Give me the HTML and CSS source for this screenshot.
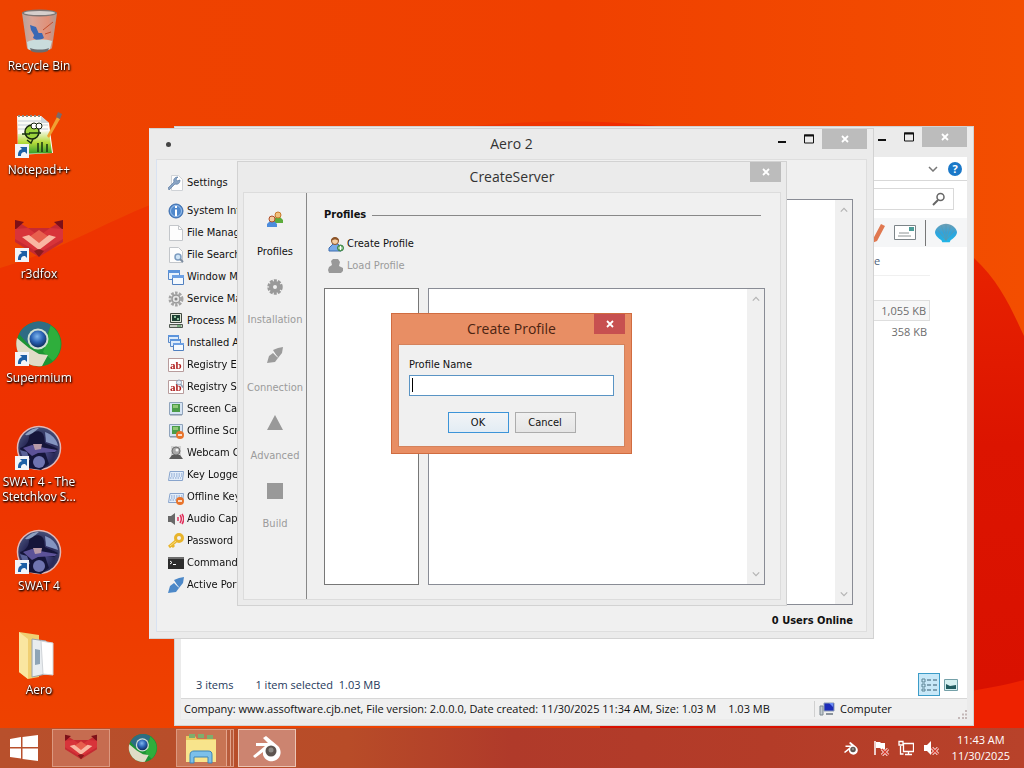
FILE: index.html
```html
<!DOCTYPE html>
<html lang="en">
<head>
    <meta charset="UTF-8">
    <meta name="viewport" content="width=device-width, initial-scale=1.0">
    <title>Desktop</title>
    <link rel="stylesheet" href="styles.css">
</head>
<body>
    <!-- shared icons -->
    <svg class="sprite" aria-hidden="true">
        <defs>
            <linearGradient id="waveA" x1="0" y1="0" x2="0" y2="1">
                <stop offset="0" stop-color="#ee3400"/>
                <stop offset="0.5" stop-color="#ee3200"/>
                <stop offset="1" stop-color="#ee4400"/>
            </linearGradient>
            <linearGradient id="waveB" x1="0" y1="0" x2="0" y2="1">
                <stop offset="0" stop-color="#f02c00"/>
                <stop offset="0.5" stop-color="#dc1400"/>
                <stop offset="1" stop-color="#d81000"/>
            </linearGradient>
            <linearGradient id="sky" x1="0" y1="0" x2="1" y2="0">
                <stop offset="0" stop-color="#ee4300"/>
                <stop offset="0.55" stop-color="#f04000"/>
                <stop offset="1" stop-color="#f34e00"/>
            </linearGradient>
            <linearGradient id="glass" x1="0" y1="0" x2="1" y2="0">
                <stop offset="0" stop-color="#b4a29c"/>
                <stop offset="0.3" stop-color="#d9a496"/>
                <stop offset="0.75" stop-color="#e09078"/>
                <stop offset="1" stop-color="#a99b97"/>
            </linearGradient>
            <linearGradient id="grass" x1="0" y1="0" x2="0" y2="1">
                <stop offset="0" stop-color="#f2f7e6"/>
                <stop offset="0.5" stop-color="#b6dc3c"/>
                <stop offset="1" stop-color="#2f9c28"/>
            </linearGradient>
            <radialGradient id="orb" cx="0.45" cy="0.35" r="0.7">
                <stop offset="0" stop-color="#7fb6ee"/>
                <stop offset="0.5" stop-color="#2a62b4"/>
                <stop offset="1" stop-color="#0c2450"/>
            </radialGradient>
            <radialGradient id="night" cx="0.5" cy="0.6" r="0.6">
                <stop offset="0" stop-color="#57589a"/>
                <stop offset="0.6" stop-color="#2a2a58"/>
                <stop offset="1" stop-color="#48527a"/>
            </radialGradient>
            <linearGradient id="shellFill" x1="0" y1="0" x2="0" y2="1">
                <stop offset="0" stop-color="#6f9fb4"/>
                <stop offset="0.5" stop-color="#2fa4dc"/>
                <stop offset="1" stop-color="#1fb6e8"/>
            </linearGradient>
        </defs>

        <symbol id="i-arrow" viewBox="0 0 14 14">
            <rect width="14" height="14" fill="#f2f4f8"/>
            <path d="M3 12c0-4 1-6 4-7L5 3h7v7l-2-2c-3 0-4 1-4 4z" fill="#1d5fa6"/>
        </symbol>
        <symbol id="i-bin" viewBox="0 0 48 48">
            <path d="M7 5l5 35c1 4 23 4 25 0l5-35z" fill="url(#glass)"/>
            <ellipse cx="24.500" cy="5" rx="17.500" ry="3.500" fill="#7e7674"/>
            <ellipse cx="24.500" cy="5" rx="15.500" ry="2" fill="#d6cfcc"/>
            <path d="M15 17l6 2 3 7-5 1-3-5zM20 25l7 0 2 5-6 3-5-3z" fill="#3a68b4"/>
            <path d="M12 34c6-3 18-3 25-1l-2 8c-4 3-18 3-22 0z" fill="#c9dcdc"/>
            <path d="M15 40c6 2 14 2 19 0l-1 3c-5 2-13 2-17 0z" fill="#6b6d70"/>
            <path d="M28 22l10-8M30 26l6-2" stroke="#c05030" fill="none"/>
        </symbol>
        <symbol id="i-notepad" viewBox="0 0 48 48">
            <path d="M2 4h24l8 7 4 30-35 2z" fill="#fbfbf6"/>
            <path d="M3 9h24M3 13h30M3 17h30" stroke="#c4ccd4" fill="none"/>
            <path d="M3 22l31-3 3 22-34 1z" fill="url(#grass)"/>
            <path d="M3 4h22" stroke="#8c8c84" stroke-width="2" stroke-dasharray="2 2"/>
            <path d="M26 4l8 7h-8z" fill="#cdd5da"/>
            <ellipse cx="17" cy="20" rx="7" ry="7" fill="#9ad23c" stroke="#16240c" stroke-width="1.500"/>
            <circle cx="19" cy="14" r="3" fill="#fff" stroke="#16240c"/>
            <circle cx="24" cy="14" r="3" fill="#fff" stroke="#16240c"/>
            <path d="M7 22h8M14 21h12M12 28l4 3 2-4M23 40v-9M27 40V30M32 40v-8" stroke="#183410" stroke-width="1.500" fill="none"/>
            <path d="M32 24L42 5l3 2-11 19z" fill="#f0a032"/>
            <path d="M41 5l2-5 4 2-2 5z" fill="#7a6a6a"/>
        </symbol>
        <symbol id="i-fox" viewBox="0 0 48 48">
            <path d="M0 4l13 8h22l13-8v22L24 41 0 26z" fill="#c62a32"/>
            <path d="M0 4l9 2-9 8zM48 4l-9 2 9 8z" fill="#7d1018"/>
            <path d="M0 13l13-1 11 8 11-8 13 1v10L24 37 0 23z" fill="#d8343a"/>
            <path d="M24 14l10 7-10 7-10-7z" fill="#e8604e"/>
            <path d="M7 21l7-2 10 8 10-8 7 2-17 13z" fill="#f9b7a2"/>
            <path d="M19 35l5-2 5 2-5 6z" fill="#8c1a1c"/>
        </symbol>
        <symbol id="i-chrome" viewBox="0 0 48 48">
            <circle cx="24" cy="24" r="22.500" fill="#1d9434"/>
            <path d="M35 5A22.500 22.500 0 0 1 38 41L28 32l5-12z" fill="#2fae3c"/>
            <path d="M4 14A22.500 22.500 0 0 1 36 5L31 17 13 24z" fill="#2f6c84"/>
            <path d="M2 18l12 10 10 6 9 1-6 11A22.500 22.500 0 0 1 2 18z" fill="#dfdcc6"/>
            <circle cx="23" cy="19" r="10.500" fill="#cfe0d4"/>
            <circle cx="23" cy="19" r="8.500" fill="url(#orb)"/>
        </symbol>
        <symbol id="i-swat" viewBox="0 0 48 48">
            <circle cx="24" cy="24" r="21.500" fill="url(#night)" stroke="#e2b8b6" stroke-width="1.500"/>
            <path d="M5 24c6-2 9-6 9-12 6-7 14-6 15 1l1 6 13 6-4 4-9-1 4 12-8 6-14-2z" fill="#15153a"/>
            <path d="M10 11c5-6 10-7 14-7-5 4-9 8-14 7z" fill="#8d9fc0"/>
            <path d="M8 24l9-3 8 2 17 3-2 2-17 1-6 3z" fill="#5c5298"/>
            <path d="M18 20h9l-1 5-6 1z" fill="#b79aa8"/>
            <path d="M30 8c7 2 12 8 13 14l-12-4z" fill="#8494c0"/>
            <path d="M5 26l7 2 3 8-6 1z" fill="#5a6298"/>
            <circle cx="24" cy="38" r="6" fill="#6f74b0"/>
        </symbol>
        <symbol id="i-folder" viewBox="0 0 48 48">
            <path d="M4 0l20 3v42l-11 2-9-7z" fill="#f0cf72"/>
            <path d="M4 0l9 7v40l-9-7z" fill="#fae6a0"/>
            <path d="M17 7l14 2v33l-14 3z" fill="#e9edf0" stroke="#9aa4ac"/>
            <path d="M20 17l5 1v14l-5 1z" fill="#8fa4b6"/>
            <path d="M26 9l12 2v32l-10-1z" fill="#fff" stroke="#d0d4d8"/>
        </symbol>
        <symbol id="i-blender" viewBox="0 0 32 32">
            <path d="M2 24l12-10H5v-3h12l-5-5 3-2 12 10a9 9 0 1 1-15 9v-3l-8 6z" fill="#fff"/>
            <circle cx="20" cy="19" r="5.500" fill="#5c5450"/>
            <circle cx="20" cy="18" r="2.500" fill="#8d8a86"/>
        </symbol>
        <symbol id="i-explorer" viewBox="0 0 32 32">
            <path d="M1 4h9l2 3h19v23H1z" fill="#e9c95e"/>
            <path d="M4 2h6v4H4zM13 2h6v4h-6zM22 3h6v4h-6z" fill="#7fae6c"/>
            <path d="M1 8h30v22H1z" fill="#f8e48c"/>
            <path d="M5 31v-8c0-3 2-4 4-4h14c3 0 4 1 4 4v8h-4v-6H9v6z" fill="#7cc0ea" stroke="#3c84b8"/>
        </symbol>

        <symbol id="i-page" viewBox="0 0 16 16">
            <path d="M1.500.5h9l4 4v11h-13z" fill="#fdfdfd" stroke="#c3c6ca"/>
            <path d="M10.500.5v4h4" fill="none" stroke="#c3c6ca"/>
        </symbol>
        <symbol id="i-wrench" viewBox="0 0 16 16">
            <path d="M3.500.5h7l4 4v11h-11z" fill="#fdfdfd" stroke="#cfd2d6"/>
            <path d="M1 15l-1-2 6-6c-1-3 1-5 4-5L8 4l1 2 3-1c0 3-2 5-5 4z" fill="#8aa4c4" stroke="#5c7ca4" stroke-width="0.700"/>
        </symbol>
        <symbol id="i-info" viewBox="0 0 16 16">
            <circle cx="8" cy="8" r="7" fill="#4f88cc" stroke="#3c6cac"/>
            <circle cx="8" cy="8" r="5.500" fill="none" stroke="#9cc0ea"/>
            <path d="M8 3v2M8 6.500V13" stroke="#fff" stroke-width="2"/>
        </symbol>
        <symbol id="i-find" viewBox="0 0 16 16">
            <path d="M1.500.5h9l4 4v11h-13z" fill="#fdfdfd" stroke="#c3c6ca"/>
            <circle cx="10" cy="10" r="3" fill="#cfe4f6" stroke="#7c9cc0" stroke-width="1.500"/>
            <path d="M12 12l3 3" stroke="#7c8ca0" stroke-width="2"/>
        </symbol>
        <symbol id="i-windows" viewBox="0 0 16 16">
            <path d="M.5 1.500h11v9H.5z" fill="#e8f2fc" stroke="#5888c8"/>
            <path d="M0 1h12v3H0z" fill="#5c94dc"/>
            <path d="M4.500 6.500h11v9h-11z" fill="#f4f9fe" stroke="#5080c0"/>
            <path d="M4 6h12v3H4z" fill="#6ca0e4"/>
        </symbol>
        <symbol id="i-apps" viewBox="0 0 16 16">
            <path d="M.5.500h10v7H.5z" fill="#dcebfa" stroke="#5888c8"/>
            <path d="M0 0h11v2H0z" fill="#5c94dc"/>
            <path d="M2.500 4.500h10v7h-10z" fill="#dcebfa" stroke="#5888c8"/>
            <path d="M2 4h11v2H2z" fill="#5c94dc"/>
            <path d="M5.500 8.500h10v7h-10z" fill="#f4f9fe" stroke="#5080c0"/>
            <path d="M5 8h11v2H5z" fill="#6ca0e4"/>
        </symbol>
        <symbol id="i-gear" viewBox="0 0 16 16">
            <circle cx="8" cy="8" r="6" fill="none" stroke="#a4a4a4" stroke-width="3" stroke-dasharray="2.500 1.300"/>
            <circle cx="8" cy="8" r="4" fill="#e4e4e4" stroke="#969696" stroke-width="1.500"/>
            <circle cx="8" cy="8" r="1.500" fill="#888"/>
        </symbol>
        <symbol id="i-computer" viewBox="0 0 16 16">
            <path d="M2.500.5h11v9h-11z" fill="#dfe6d8" stroke="#404840"/>
            <path d="M4 2h8v6H4z" fill="#1e4034"/>
            <path d="M6 3h2v2H6zM9 5h2v2H9z" fill="#8cc09c"/>
            <path d="M1.500 11.500h13v3h-13z" fill="#c8ccc4" stroke="#505850"/>
            <path d="M9 13h4" stroke="#2c8c3c"/>
        </symbol>
        <symbol id="i-reg" viewBox="0 0 16 16">
            <path d="M.5 1.500h15v13H.5z" fill="#fff" stroke="#b89c9c"/>
            <text x="2" y="12" font-family="Liberation Serif, serif" font-size="11" font-weight="bold" fill="#b02020">ab</text>
        </symbol>
        <symbol id="i-lens" viewBox="0 0 16 16">
            <circle cx="11" cy="3.500" r="2.500" fill="#e4eef8" stroke="#8c9cb4"/>
            <path d="M13 5.500l2 3" stroke="#8c9cb4" stroke-width="1.500"/>
        </symbol>
        <symbol id="i-screen" viewBox="0 0 16 16">
            <path d="M1.500 1.500h13v12h-13z" fill="#d6e4f4" stroke="#90a4bc"/>
            <path d="M4 3h8v8H4z" fill="#4c9c48"/>
            <path d="M5 4h5v3H5z" fill="#90c878"/>
            <path d="M2 14h12" stroke="#8090a4"/>
        </symbol>
        <symbol id="i-minus" viewBox="0 0 16 16">
            <circle cx="12" cy="12" r="4" fill="#e8742c"/>
            <path d="M10 12h4" stroke="#fff" stroke-width="1.500"/>
        </symbol>
        <symbol id="i-webcam" viewBox="0 0 16 16">
            <path d="M3 1h10v10H3z" fill="#d2d2d2"/>
            <circle cx="8" cy="6" r="4" fill="#a8a8a8" stroke="#707070"/>
            <circle cx="9" cy="5" r="1.500" fill="#f4f4f4"/>
            <path d="M1 14l3-4h8l3 4z" fill="#5c5c5c"/>
        </symbol>
        <symbol id="i-keyboard" viewBox="0 0 16 16">
            <path d="M2 4.500h13.500l-1 9H.5z" fill="#e4eefa" stroke="#88a4cc"/>
            <path d="M3 7h11M3 9h11M2 11h11" stroke="#7c9ccc" stroke-dasharray="1.500 1"/>
        </symbol>
        <symbol id="i-audio" viewBox="0 0 16 16">
            <path d="M0 5h3l4-3v12l-4-3H0z" fill="#686868"/>
            <path d="M10 6v4M12 4c2 3 2 5 0 8M14 3c2 3 2 7 0 10" stroke="#e0305c" stroke-width="1.500" fill="none"/>
        </symbol>
        <symbol id="i-key" viewBox="0 0 16 16">
            <circle cx="11" cy="5" r="3.500" fill="none" stroke="#e8b42c" stroke-width="3"/>
            <path d="M8 8l-7 6M4 12l2 2" stroke="#e8b42c" stroke-width="3"/>
            <path d="M8 8l-6 5" stroke="#fbe27c"/>
        </symbol>
        <symbol id="i-terminal" viewBox="0 0 16 16">
            <path d="M0 2h16v12H0z" fill="#2c2c2c"/>
            <path d="M0 2h16v2H0z" fill="#6c6c6c"/>
            <path d="M2 6l2 1.500L2 9M5 9.500h3" stroke="#fff" fill="none"/>
        </symbol>
        <symbol id="i-plug" viewBox="0 0 16 16">
            <path d="M6 3l5-2 5-1-1 6-4 5zM0 16l2-7 4-3 5 5-3 4z" fill="currentColor"/>
            <path d="M6 5l5 5" stroke="#fff" stroke-opacity="0.400"/>
        </symbol>
        <symbol id="i-profiles" viewBox="0 0 16 16">
            <path d="M6 12V9l3-3h4l3 3v3z" fill="#5cac3c"/>
            <circle cx="11" cy="4" r="3" fill="#f0c07c" stroke="#c87828"/>
            <path d="M0 16v-3l3-3h4l3 3v3z" fill="#4c8cdc"/>
            <circle cx="5" cy="8" r="3" fill="#f4cca0" stroke="#b04c28"/>
        </symbol>
        <symbol id="i-useradd" viewBox="0 0 16 16">
            <path d="M1 15v-3l4-4h5l3 4v3z" fill="#78aae8" stroke="#3c6cb0"/>
            <circle cx="7" cy="5" r="3.500" fill="#f6d0a4" stroke="#8c5428"/>
            <path d="M3 5c0-5 8-5 8 0-3-2-5-2-8 0z" fill="#8c5428"/>
            <circle cx="12.500" cy="12" r="3" fill="#6cb46c" stroke="#3c8048"/>
            <path d="M12.500 10v4M10.500 12h4" stroke="#fff"/>
        </symbol>
        <symbol id="i-user" viewBox="0 0 16 16">
            <path d="M5 1h5l2 3-1 4 4 2v3l-2 2H1l-1-3 1-3 3-2-1-4z" fill="#999"/>
        </symbol>
        <symbol id="i-min" viewBox="0 0 10 10"><path d="M1 8h8" stroke="#111" stroke-width="2"/></symbol>
        <symbol id="i-max" viewBox="0 0 12 10"><path d="M1.500 1h9v8h-9z" fill="none" stroke="#111"/><path d="M1 1.500h10" stroke="#111" stroke-width="2"/></symbol>
        <symbol id="i-close" viewBox="0 0 8 8"><path d="M1 1l6 6M7 1L1 7" stroke="#fff" stroke-width="1.800"/></symbol>
        <symbol id="i-up" viewBox="0 0 10 6"><path d="M1 5l4-4 4 4" fill="none" stroke="#b4b4b4" stroke-width="1.500"/></symbol>
        <symbol id="i-down" viewBox="0 0 10 6"><path d="M1 1l4 4 4-4" fill="none" stroke="currentColor" stroke-width="1.500"/></symbol>
    </svg>

    <main class="desktop">
        <svg class="wallpaper" viewBox="0 0 1024 768" preserveAspectRatio="none" aria-hidden="true">
            <rect width="1024" height="768" fill="url(#sky)"/>
            <path d="M0 268C60 250 100 225 150 205C300 145 450 118 600 122C800 130 930 200 974 256V768H0z" fill="url(#waveA)"/>
            <path d="M600 122C800 130 930 190 974 258C1000 282 1012 310 1024 336V768H600z" fill="url(#waveB)"/>
            <path d="M950 694c30-4 50-8 74-14v88h-74z" fill="#ee2200"/>
        </svg>

        <nav class="shortcuts">
            <a class="shortcut" href="#"><svg class="shortcut-icon"><use href="#i-bin"/></svg>Recycle Bin</a>
            <a class="shortcut" href="#"><svg class="shortcut-icon"><use href="#i-notepad"/><use href="#i-arrow" y="32" width="14" height="14"/></svg>Notepad++</a>
            <a class="shortcut" href="#"><svg class="shortcut-icon"><use href="#i-fox"/><use href="#i-arrow" y="32" width="14" height="14"/></svg>r3dfox</a>
            <a class="shortcut" href="#"><svg class="shortcut-icon"><use href="#i-chrome"/><use href="#i-arrow" y="32" width="14" height="14"/></svg>Supermium</a>
            <a class="shortcut" href="#"><svg class="shortcut-icon"><use href="#i-swat"/><use href="#i-arrow" y="32" width="14" height="14"/></svg>SWAT 4 - The Stetchkov S...</a>
            <a class="shortcut" href="#"><svg class="shortcut-icon"><use href="#i-swat"/><use href="#i-arrow" y="32" width="14" height="14"/></svg>SWAT 4</a>
            <a class="shortcut" href="#"><svg class="shortcut-icon"><use href="#i-folder"/></svg>Aero</a>
        </nav>

        <!-- file explorer -->
        <section class="window explorer">
            <header class="titlebar">
                <div class="controls">
                    <button class="control" aria-label="Minimize"><svg width="10" height="10"><use href="#i-min"/></svg></button>
                    <button class="control" aria-label="Maximize"><svg width="12" height="10"><use href="#i-max"/></svg></button>
                    <button class="control close wide" aria-label="Close"><svg width="8" height="8"><use href="#i-close"/></svg></button>
                </div>
            </header>
            <div class="explorer-body">
                <div class="ribbon">
                    <svg width="10" height="6"><use href="#i-down"/></svg>
                    <button class="help" aria-label="Help">?</button>
                </div>
                <div class="address">
                    <div class="search">
                        <input type="search" aria-label="Search">
                        <svg width="14" height="14" viewBox="0 0 14 14"><circle cx="8.500" cy="5" r="3.500" fill="none" stroke="#666" stroke-width="1.500"/><path d="M6 8l-5 5" stroke="#666" stroke-width="2"/></svg>
                    </div>
                </div>
                <div class="toolbar">
                    <svg width="16" height="20" viewBox="0 0 16 20"><path d="M4 16L12 1l4 2-8 15-5 2z" fill="#e07850"/></svg>
                    <svg width="22" height="15" viewBox="0 0 22 15"><path d="M.5.5h21v14H.5z" fill="#fff" stroke="#7c8488"/><path d="M15 2h5v4h-5z" fill="#4c9c98"/><path d="M5 8h10M4 11h13" stroke="#8c9494"/></svg>
                    <span class="divider"></span>
                    <svg width="22" height="22" viewBox="0 0 24 22"><path d="M7 19C4 17 0 14 0 10 1 5 6 1 12 1s11 4 12 9c0 4-4 7-7 9l-1 2H8z" fill="url(#shellFill)"/><path d="M12 19L3 8M12 19L7 3M12 19V2M12 19l5-16M12 19l9-11" stroke="#5c98b0" stroke-width="0.800"/></svg>
                </div>
                <table class="files">
                    <thead>
                        <tr><th>Size</th></tr>
                    </thead>
                    <tbody>
                        <tr class="selected"><td>1,055 KB</td></tr>
                        <tr><td>358 KB</td></tr>
                    </tbody>
                </table>
                <div class="details">
                    <span>3 items</span>
                    <span>1 item selected&nbsp; 1.03 MB</span>
                    <div class="views">
                        <button class="view active" aria-label="Details"><svg width="16" height="14" viewBox="0 0 16 14"><path d="M1 1h3v3H1zM1 6h3v3H1zM1 11h3v2H1z" fill="none" stroke="#5c8494"/><path d="M6 2h4M12 2h4M6 7h4M12 7h4M6 12h4M12 12h4" stroke="#34586c"/></svg></button>
                        <button class="view" aria-label="Large icons"><svg width="14" height="12" viewBox="0 0 14 12"><path d="M.5.5h13v11H.5z" fill="#d4f0f0" stroke="#74a0a8"/><path d="M2 5l4 2 6-1v4H2z" fill="#205c60"/></svg></button>
                    </div>
                </div>
                <footer class="statusbar">
                    <span>Company: www.assoftware.cjb.net, File version: 2.0.0.0, Date created: 11/30/2025 11:34 AM, Size: 1.03 M</span>
                    <span class="status-size">1.03 MB</span>
                    <span class="status-zone">
                        <svg width="16" height="14" viewBox="0 0 16 14"><path d="M5 1h10v8H5z" fill="#1c2cb8" stroke="#8c9cb4"/><path d="M10 1h4v4z" fill="#6c8cf4"/><path d="M1 4h3v9H1z" fill="#c4ccd0" stroke="#7c8890"/><path d="M7 12h7" stroke="#8c949c" stroke-width="2"/></svg>
                        Computer
                    </span>
                    <svg class="grip" width="9" height="9" viewBox="0 0 9 9"><path d="M7 0h2v2H7zM4 3.500h2v2H4zM7 3.500h2v2H7zM0 7h2v2H0zM4 7h2v2H4zM7 7h2v2H7z" fill="#c4b8b8"/></svg>
                </footer>
            </div>
        </section>

        <!-- main program -->
        <section class="window aero">
            <header class="titlebar">
                <span class="app-dot"></span>
                <h1>Aero 2</h1>
                <div class="controls">
                    <button class="control" aria-label="Minimize"><svg width="10" height="10"><use href="#i-min"/></svg></button>
                    <button class="control" aria-label="Maximize"><svg width="12" height="10"><use href="#i-max"/></svg></button>
                    <button class="control close wide" aria-label="Close"><svg width="8" height="8"><use href="#i-close"/></svg></button>
                </div>
            </header>
            <div class="aero-body">
                <ul class="tools">
                    <li class="settings"><svg><use href="#i-wrench"/></svg>Settings</li>
                    <li><svg><use href="#i-info"/></svg>System Info</li>
                    <li><svg><use href="#i-page"/></svg>File Manager</li>
                    <li><svg><use href="#i-find"/></svg>File Search</li>
                    <li><svg><use href="#i-windows"/></svg>Window Man</li>
                    <li><svg><use href="#i-gear"/></svg>Service Man</li>
                    <li><svg><use href="#i-computer"/></svg>Process Man</li>
                    <li><svg><use href="#i-apps"/></svg>Installed App</li>
                    <li><svg><use href="#i-reg"/></svg>Registry Edit</li>
                    <li><svg><use href="#i-reg"/><use href="#i-lens"/></svg>Registry Se</li>
                    <li><svg><use href="#i-screen"/></svg>Screen Cap</li>
                    <li><svg><use href="#i-screen"/><use href="#i-minus"/></svg>Offline Scre</li>
                    <li><svg><use href="#i-webcam"/></svg>Webcam Ca</li>
                    <li><svg><use href="#i-keyboard"/></svg>Key Logger</li>
                    <li><svg><use href="#i-keyboard"/><use href="#i-minus"/></svg>Offline Keys</li>
                    <li><svg><use href="#i-audio"/></svg>Audio Capt</li>
                    <li><svg><use href="#i-key"/></svg>Password</li>
                    <li><svg><use href="#i-terminal"/></svg>Command</li>
                    <li><svg class="blue"><use href="#i-plug"/></svg>Active Ports</li>
                </ul>
                <div class="pane output">
                    <div class="scrollbar">
                        <svg><use href="#i-up"/></svg>
                        <svg><use href="#i-down"/></svg>
                    </div>
                </div>
                <p class="online">0 Users Online</p>
            </div>
        </section>

        <!-- create server -->
        <section class="window server">
            <header class="titlebar">
                <h2>CreateServer</h2>
                <div class="controls">
                    <button class="control close" aria-label="Close"><svg width="8" height="8"><use href="#i-close"/></svg></button>
                </div>
            </header>
            <div class="server-body">
                <nav class="steps">
                    <button class="step"><svg><use href="#i-profiles"/></svg>Profiles</button>
                    <button class="step" disabled><svg viewBox="0 0 16 16"><circle cx="8" cy="8" r="6.500" fill="none" stroke="#999" stroke-width="2.500" stroke-dasharray="3 1.100"/><circle cx="8" cy="8" r="4" fill="none" stroke="#999" stroke-width="4"/></svg>Installation</button>
                    <button class="step" disabled><svg><use href="#i-plug"/></svg>Connection</button>
                    <button class="step" disabled><svg viewBox="0 0 16 16"><path d="M8 0l8 15H0z" fill="#999"/></svg>Advanced</button>
                    <button class="step" disabled><svg viewBox="0 0 16 16"><path d="M0 0h16v16H0z" fill="#999"/></svg>Build</button>
                </nav>
                <div class="profiles">
                    <h3>Profiles</h3>
                    <button class="action"><svg><use href="#i-useradd"/></svg>Create Profile</button>
                    <button class="action" disabled><svg><use href="#i-user"/></svg>Load Profile</button>
                    <div class="panes">
                        <div class="pane profile-list"></div>
                        <div class="pane profile-info">
                            <div class="scrollbar">
                                <svg><use href="#i-up"/></svg>
                                <svg><use href="#i-down"/></svg>
                            </div>
                        </div>
                    </div>
                </div>
            </div>
        </section>

        <!-- create profile dialog -->
        <section class="window dialog">
            <header class="titlebar">
                <h2>Create Profile</h2>
                <div class="controls">
                    <button class="control close" aria-label="Close"><svg width="8" height="8"><use href="#i-close"/></svg></button>
                </div>
            </header>
            <form class="dialog-body">
                <label for="profileName">Profile Name</label>
                <input type="text" id="profileName">
                <div class="dialog-buttons">
                    <button type="button" class="default">OK</button>
                    <button type="button">Cancel</button>
                </div>
            </form>
        </section>
    </main>

    <footer class="taskbar">
        <button class="start" aria-label="Start"><svg width="28" height="26" viewBox="0 0 28 26"><path d="M0 4l11-2v10H0zM12.500 2L28 0v12H12.500zM0 13.500h11v10L0 22zM12.500 13.500H28V26l-15.500-2z" fill="#fff"/></svg></button>
        <button class="task open" aria-label="r3dfox"><svg width="32" height="32"><use href="#i-fox"/></svg></button>
        <button class="task" aria-label="Supermium"><svg width="30" height="30"><use href="#i-chrome"/></svg></button>
        <button class="task open stacked" aria-label="File Explorer"><svg width="32" height="32"><use href="#i-explorer"/></svg></button>
        <button class="task open current" aria-label="Aero"><svg width="34" height="32"><use href="#i-blender"/></svg></button>
        <div class="tray">
            <svg viewBox="0 0 32 32"><use href="#i-blender"/></svg>
            <svg class="tray-flag" viewBox="0 0 16 16"><path d="M2 1v14" stroke="#fff" stroke-width="1.500"/><path d="M3 2h4l1 1h4v6H8L7 8H3z" fill="#fff"/><path d="M9 9l6 6M15 9l-6 6" stroke="#fff" stroke-width="3"/><path d="M9 9l6 6M15 9l-6 6" stroke="#d83c2c" stroke-width="1.500"/></svg>
            <svg viewBox="0 0 16 16"><path d="M5.500 3.500h10v8h-10zM7 14.500h7M10.500 12v2M2.500 6v8h3M1 1.500h4V5H1z" fill="none" stroke="#fff" stroke-width="1.300"/></svg>
            <svg viewBox="0 0 16 16"><path d="M1 5h3l4-4v14l-4-4H1z" fill="#fff"/><path d="M9 8l6 6M15 8l-6 6" stroke="#fff" stroke-width="3"/><path d="M9 8l6 6M15 8l-6 6" stroke="#d83c2c" stroke-width="1.500"/></svg>
        </div>
        <div class="clock">11:43 AM<br>11/30/2025</div>
    </footer>
</body>
</html>
```
FILE: styles.css
```css
* {
    box-sizing: border-box;
}
body {
    margin: 0;
    min-height: 100vh;
    display: flex;
    flex-direction: column;
    overflow: hidden;
    font-family: "Open Sans", "Noto Sans", sans-serif;
    font-size: 11px;
    line-height: 16px;
    color: #111;
}
button {
    font: inherit;
    color: inherit;
    padding: 0;
    border: none;
    background: none;
}
h1, h2, h3, p, ul {
    margin: 0;
    padding: 0;
}
svg {
    display: block;
    flex: none;
}
.sprite {
    position: absolute;
    width: 0;
    height: 0;
}

/* desktop */
.desktop {
    flex: 1;
    position: relative;
}
.wallpaper {
    position: fixed;
    inset: 0;
    width: 100%;
    height: 100%;
    z-index: -1;
}
.shortcuts {
    width: 78px;
}
.shortcut {
    display: flex;
    flex-direction: column;
    align-items: center;
    gap: 2px;
    height: 104px;
    padding-top: 8px;
    font-size: 12px;
    line-height: 15px;
    color: #fff;
    text-align: center;
    text-decoration: none;
    text-shadow: 1px 1px 2px #000, 0 1px 2px #000;
}
.shortcut-icon {
    width: 48px;
    height: 48px;
}

/* windows */
.window {
    position: absolute;
    display: flex;
    flex-direction: column;
    padding: 0 6px 6px;
    background: #ebebeb;
    border: 1px solid #d2d2d2;
}
.titlebar {
    flex: none;
    display: grid;
    grid-template-columns: 1fr auto 1fr;
    height: 30px;
}
.titlebar h1,
.titlebar h2 {
    grid-column: 2;
    font-size: 14px;
    font-weight: normal;
    line-height: 30px;
    color: #333;
}
.controls {
    grid-column: 3;
    grid-row: 1;
    justify-self: end;
    display: flex;
    height: 20px;
}
.control {
    display: flex;
    align-items: center;
    justify-content: center;
    width: 27px;
}
.control.close {
    width: 31px;
    background: #bcbcbc;
}
.control.wide {
    width: 45px;
}
.app-dot {
    align-self: center;
    width: 5px;
    height: 5px;
    margin-left: 10px;
    border-radius: 50%;
    background: #444;
}

/* explorer */
.explorer {
    left: 174px;
    top: 126px;
    width: 800px;
    height: 600px;
}
.explorer-body {
    flex: 1;
    display: flex;
    flex-direction: column;
    background: #fff;
}
.ribbon {
    display: flex;
    justify-content: flex-end;
    align-items: center;
    gap: 10px;
    height: 24px;
    padding-right: 5px;
    border-bottom: 1px solid #d8d8d8;
    color: #777;
}
.help {
    width: 14px;
    height: 14px;
    border-radius: 50%;
    background: #1a78c8;
    color: #fff;
    font-weight: bold;
    line-height: 14px;
}
.address {
    display: flex;
    justify-content: flex-end;
    height: 37px;
    padding: 7px 13px 8px 0;
}
.search {
    display: flex;
    align-items: center;
    width: 200px;
    padding-right: 7px;
    border: 1px solid #d9d9d9;
}
.search input {
    flex: 1;
    min-width: 0;
    border: none;
    outline: none;
}
.toolbar {
    display: flex;
    justify-content: flex-end;
    align-items: center;
    gap: 9px;
    height: 29px;
    padding-right: 10px;
    background: #f5f6f7;
}
.divider {
    width: 1px;
    height: 26px;
    background: #777;
}
.files {
    width: 83px;
    margin: 0 37px 0 auto;
    border-spacing: 0;
    font-size: 11px;
    color: #6d6d6d;
}
.files th {
    height: 29px;
    padding: 0 13px;
    border-bottom: 1px solid #f0f0f0;
    font-weight: normal;
    text-align: left;
    color: #4c607a;
}
.files tbody::before {
    content: "";
    display: block;
    height: 24px;
}
.files td {
    height: 21px;
    padding: 0 3px;
    text-align: right;
}
.files .selected td {
    background: #f7f7f7;
    border: 1px solid #dedede;
}
.details {
    display: flex;
    align-items: center;
    gap: 22px;
    margin-top: auto;
    padding: 0 7px 2px 15px;
    color: #1e395b;
}
.views {
    display: flex;
    align-items: center;
    gap: 2px;
    margin-left: auto;
}
.view {
    display: flex;
    align-items: center;
    justify-content: center;
    width: 18px;
    height: 23px;
}
.view.active {
    width: 22px;
    background: #c8e8f8;
    border: 1px solid #3c9cc8;
}
.statusbar {
    display: flex;
    align-items: center;
    height: 21px;
    padding-left: 3px;
    border-top: 1px solid #d7d7d7;
    background: #f0f0f0;
    white-space: nowrap;
}
.status-size {
    margin-left: 12px;
}
.status-zone {
    display: flex;
    align-items: center;
    gap: 5px;
    width: 144px;
    height: 16px;
    margin-left: auto;
    padding-left: 4px;
    border-left: 1px solid #d0d0d0;
}
.grip {
    align-self: flex-end;
}

/* main program */
.aero,
.server,
.dialog-body {
    font-family: "DejaVu Sans Condensed", "DejaVu Sans", sans-serif;
}
.titlebar {
    font-family: "Open Sans", "Noto Sans", sans-serif;
}
.aero {
    left: 149px;
    top: 128px;
    width: 725px;
    height: 511px;
    border-left-color: #e6eaf2;
}
.aero-body {
    flex: 1;
    display: grid;
    grid-template-columns: 69px 1fr;
    grid-template-rows: 1fr auto;
    gap: 7px 11px;
    padding: 12px 13px 1px 11px;
    border: 1px solid #dedede;
    border-left-color: #d8e2f2;
    background: #f0f0f0;
}
.tools {
    list-style: none;
    overflow: hidden;
}
.tools li {
    display: flex;
    align-items: center;
    gap: 3px;
    height: 22px;
    white-space: nowrap;
}
.tools svg {
    width: 16px;
    height: 16px;
}
.tools .settings {
    margin-bottom: 6px;
}
.blue {
    color: #4c88c8;
}
.pane {
    background: #fff;
    border: 1px solid #898c95;
}
.output {
    margin-top: 27px;
}
.online {
    grid-column: 2;
    font-weight: bold;
    line-height: 18px;
    text-align: right;
}
.scrollbar {
    display: flex;
    flex-direction: column;
    justify-content: space-between;
    align-items: center;
    width: 17px;
    height: 100%;
    margin-left: auto;
    padding: 7px 0;
    background: #f0f0f0;
    color: #b4b4b4;
}
.scrollbar svg {
    width: 8px;
    height: 6px;
}

/* create server */
.server {
    left: 237px;
    top: 161px;
    width: 550px;
    height: 445px;
    padding: 0 5px 5px;
}
.server-body {
    flex: 1;
    display: flex;
    border: 1px solid #dcdcdc;
    background: #f0f0f0;
}
.steps {
    width: 63px;
    padding-top: 10px;
    border-right: 1px solid #888;
}
.step {
    display: flex;
    flex-direction: column;
    align-items: center;
    gap: 17px;
    width: 100%;
    height: 68px;
    padding-top: 8px;
    white-space: nowrap;
}
.step svg {
    width: 16px;
    height: 16px;
}
.step:disabled,
.action:disabled {
    color: #9b9b9b;
}
.profiles {
    flex: 1;
    display: flex;
    flex-direction: column;
    align-items: flex-start;
    padding: 11px 15px 14px 17px;
}
.profiles h3 {
    align-self: stretch;
    display: flex;
    align-items: center;
    gap: 6px;
    margin: 0 4px 7px 0;
    font-size: 11px;
    line-height: 22px;
}
.profiles h3::after {
    content: "";
    flex: 1;
    height: 1px;
    background: #888;
}
.action {
    display: flex;
    align-items: center;
    gap: 3px;
    height: 22px;
    padding-left: 4px;
}
.action svg {
    width: 16px;
    height: 16px;
}
.panes {
    flex: 1;
    align-self: stretch;
    display: flex;
    gap: 9px;
    margin-top: 11px;
}
.profile-list {
    width: 95px;
    border-color: #777;
}
.profile-info {
    flex: 1;
}

/* create profile dialog */
.dialog {
    left: 391px;
    top: 313px;
    width: 241px;
    background: #e88e64;
    border-color: #d06c40;
}
.dialog h2 {
    color: #4c2412;
}
.dialog .control.close {
    background: #c75050;
}
.dialog-body {
    display: flex;
    flex-direction: column;
    padding: 12px 10px 13px;
    border: 1px solid #d4825c;
    background: #f0f0f0;
}
.dialog-body input {
    height: 21px;
    margin-top: 2px;
    padding: 0 4px;
    border: 1px solid #5a94c4;
    background: linear-gradient(#000, #000) 2px 2px / 1px 14px no-repeat #fff;
    font: inherit;
    outline: none;
}
.dialog-buttons {
    display: flex;
    justify-content: center;
    gap: 6px;
    margin-top: 16px;
}
.dialog-buttons button {
    width: 61px;
    height: 21px;
    border: 1px solid #acacac;
    background: linear-gradient(#f0f0f0, #e5e5e5);
}
.dialog-buttons .default {
    border-color: #3c94d8;
    background: linear-gradient(#f2f4f6, #e2ecf4);
}

/* taskbar */
.taskbar {
    display: flex;
    align-items: center;
    gap: 4px;
    height: 40px;
    padding-right: 14px;
    background: linear-gradient(90deg, #b8502c 0%, #b84c28 34%, #b03a2a 50%, #b43c28 75%, #b8422a 100%);
    color: #fff;
}
.start,
.task {
    display: flex;
    align-items: center;
    justify-content: center;
    width: 58px;
    height: 38px;
}
.start {
    width: 48px;
}
.task.open {
    border: 1px solid #dc9880;
    background: #c66c50;
}
.task.stacked {
    padding-right: 8px;
    background: linear-gradient(90deg, #c87454 49px, #e4a48c 49px 50px, #b85c3c 50px 53px, #e4a48c 53px 54px, #b85c3c 54px);
}
.task.current {
    border-color: #ecc4b4;
    background: #cc8470;
}
.tray {
    display: flex;
    gap: 9px;
    margin-left: auto;
}
.tray svg {
    width: 16px;
    height: 16px;
}
.tray .tray-flag {
    margin-left: 5px;
}
.clock {
    margin-left: 9px;
    text-align: center;
}
```
